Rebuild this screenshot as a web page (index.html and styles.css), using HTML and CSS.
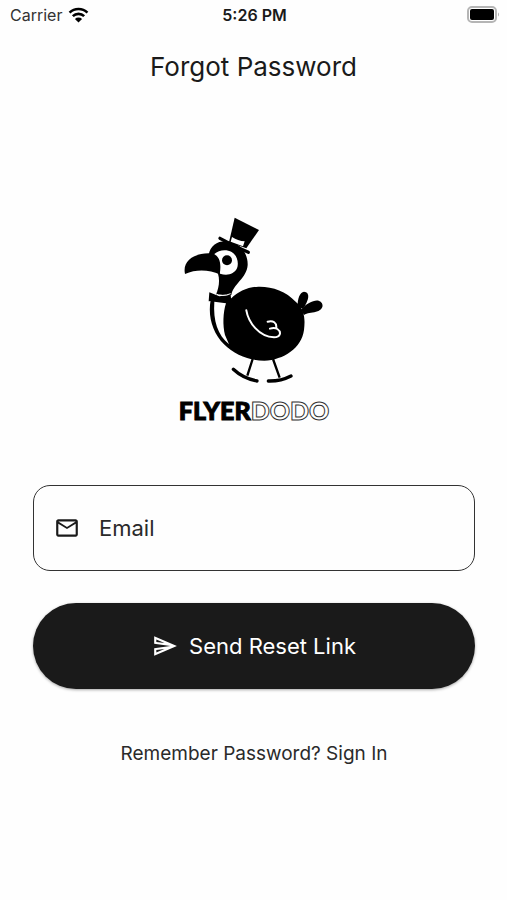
FILE: index.html
```html
<!DOCTYPE html>
<html lang="en">
<head>
    <meta charset="UTF-8">
    <meta name="viewport" content="width=device-width, initial-scale=1.0">
    <title>Forgot Password</title>
    <link rel="stylesheet" href="styles.css">
</head>
<body>
    <div class="status-bar">
        <div class="carrier">
            <span>Carrier</span>
            <svg class="wifi" viewBox="0 0 20 15" aria-hidden="true">
                <path d="M1.500 5.200a12.300 12.300 0 0 1 17 0M4.600 8.600a7.800 7.800 0 0 1 10.800 0" fill="none" stroke="#000" stroke-width="2.500"/>
                <path d="M6.600 11.200a5 5 0 0 1 6.800 0L10 14.600z"/>
            </svg>
        </div>
        <div class="time">5:26 PM</div>
        <div class="battery-wrap">
            <svg class="battery" viewBox="0 0 34 18" aria-hidden="true">
                <rect x="3" y="1" width="28" height="15" rx="4" fill="#fff" stroke="#b5b5b5" stroke-width="2"/>
                <rect x="5" y="3" width="24" height="11" rx="2"/>
                <path d="M33 6.500c1 .5 1 3.500 0 4z" fill="#999"/>
            </svg>
        </div>
    </div>

    <h1>Forgot Password</h1>

    <main class="container">
        <div class="logo">
            <svg class="dodo" viewBox="0 0 510 570" role="img" aria-label="Dodo in a top hat">
                <!-- tail -->
                <path d="M386 306C385 282 392 261 405 260C424 261 421 284 402 311Z"/>
                <path d="M396 314C413 295 434 284 449 287C468 294 463 316 441 320C427 324 415 322 405 330Z"/>
                <!-- body and belly -->
                <path d="M125 285C116 335 131 383 165 418C196 450 242 467 286 467C344 465 398 429 405 375C408 348 410 315 380 290C350 258 310 244 268 245C235 246 207 260 187 280Z"/>
                <path d="M136 290L171 295C162 322 161 362 168 390L180 418C146 389 132 348 136 290Z" fill="#fff"/>
                <!-- head and neck -->
                <path d="M119 150C124 121 145 107 176 109C212 113 237 143 236 180C233 220 193 237 187 270L140 270C150 249 153 226 147 206Z"/>
                <path d="M136 147C149 134 173 132 188 141C205 151 210 174 204 190C196 207 175 214 153 206Z" fill="#fff"/>
                <path d="M48 207C40 171 71 145 119 145C153 145 158 174 152 208C123 195 83 191 48 207Z"/>
                <circle cx="174" cy="166" r="15"/>
                <!-- hat -->
                <path d="M197 38L270 75L232 130L180 112Z"/>
                <path d="M189 96Q207 108 227 109L222 124L185 110Z" fill="#fff"/>
                <path d="M153 100Q192 122 238 142" fill="none" stroke="#000" stroke-width="10" stroke-linecap="round"/>
                <!-- bow tie -->
                <path d="M121 262L151 274L185 269L187 289L153 286L119 289Z"/>
                <path d="M137 266Q162 276 185 266" fill="none" stroke="#fff" stroke-width="3"/>
                <!-- wing -->
                <path d="M232 316C238 352 270 395 315 397C335 397 338 381 325 372Q316 367 303 371M322 368C323 353 313 346 296 350" fill="none" stroke="#fff" stroke-width="6" stroke-linecap="round"/>
                <!-- legs -->
                <path d="M251 462L235 512M312 462L332 518" fill="none" stroke="#000" stroke-width="7"/>
                <path d="M193 493Q223 521 264 528M298 528Q335 529 366 513" fill="none" stroke="#000" stroke-width="10" stroke-linecap="round"/>
            </svg>
            <div class="wordmark"><span class="flyer">FLYER</span><span class="outline">DODO</span></div>
        </div>

        <form>
            <div class="field">
                <label for="email" aria-label="Email">
                    <svg class="icon" viewBox="0 0 24 24" aria-hidden="true">
                        <path d="M22 6c0-1.100-.9-2-2-2H4c-1.100 0-2 .9-2 2v12c0 1.100.9 2 2 2h16c1.100 0 2-.9 2-2V6zm-2 0-8 5-8-5h16zm0 12H4V8l8 5 8-5v10z"/>
                    </svg>
                </label>
                <input type="email" id="email" name="email" placeholder="Email">
            </div>
            <button type="submit">
                <svg class="icon" viewBox="0 0 24 24" aria-hidden="true">
                    <path d="M2.010 3 2 10l15 2-15 2 .01 7L23 12 2.010 3zM4 6.030l7.510 3.220-7.520-1L4 6.030zm7.500 8.720L3.990 17.970v-2.220l7.510-1z"/>
                </svg>
                Send Reset Link
            </button>
        </form>
        <a class="sign-in" href="#">Remember Password? Sign In</a>
    </main>
</body>
</html>
```
FILE: styles.css
```css
* {
    box-sizing: border-box;
}
body {
    font-family: Inter, 'Liberation Sans', sans-serif;
    margin: 0;
    background-color: #fefefe;
    color: #1a1a1a;
}
.status-bar {
    display: grid;
    grid-template-columns: 1fr auto 1fr;
    align-items: center;
    height: 30px;
    padding: 0 8px 0 10px;
    font-size: 16px;
}
.carrier {
    display: flex;
    align-items: center;
    gap: 6px;
    color: #333333;
}
.wifi {
    width: 21px;
    height: 16px;
}
.time {
    font-weight: 600;
}
.battery-wrap {
    display: flex;
    justify-content: flex-end;
}
.battery {
    width: 34px;
    height: 18px;
}
h1 {
    margin: 19px 0 0;
    font-size: 26px;
    line-height: 36px;
    font-weight: 400;
    text-align: center;
}
.container {
    padding: 120px 32px 32px 33px;
    text-align: center;
}
.logo {
    display: flex;
    flex-direction: column;
    align-items: center;
}
.dodo {
    width: 170px;
    height: 190px;
}
.wordmark {
    margin-top: 1px;
    font-family: Lato, sans-serif;
    font-size: 25px;
    line-height: 28px;
    font-weight: 900;
    color: #000000;
}
.flyer {
    -webkit-text-stroke: 1px #000000;
}
.outline {
    color: #ffffff;
    -webkit-text-stroke: 1px #333333;
}
form {
    margin-top: 61px;
}
.field {
    display: flex;
    align-items: center;
    height: 86px;
    padding: 0 20px;
    gap: 19px;
    border: 1px solid #333333;
    border-radius: 17px;
}
.field label {
    display: flex;
}
.icon {
    width: 26px;
    height: 26px;
    fill: currentColor;
}
input {
    flex: 1;
    min-width: 0;
    height: 100%;
    padding: 0;
    border: none;
    outline: none;
    background: none;
    font-family: inherit;
    font-size: 22px;
    color: #1a1a1a;
}
input::placeholder {
    color: #2a2a2a;
    opacity: 1;
}
button {
    display: flex;
    justify-content: center;
    align-items: center;
    gap: 11px;
    width: 100%;
    height: 86px;
    margin-top: 32px;
    border: none;
    border-radius: 43px;
    background-color: #1a1a1a;
    box-shadow: 0 1px 3px rgba(0, 0, 0, 0.35);
    color: #ffffff;
    font-family: inherit;
    font-size: 22px;
    cursor: pointer;
}
.sign-in {
    display: inline-block;
    margin-top: 53px;
    font-size: 19px;
    line-height: 24px;
    color: #2a2a2a;
    text-decoration: none;
}
```
